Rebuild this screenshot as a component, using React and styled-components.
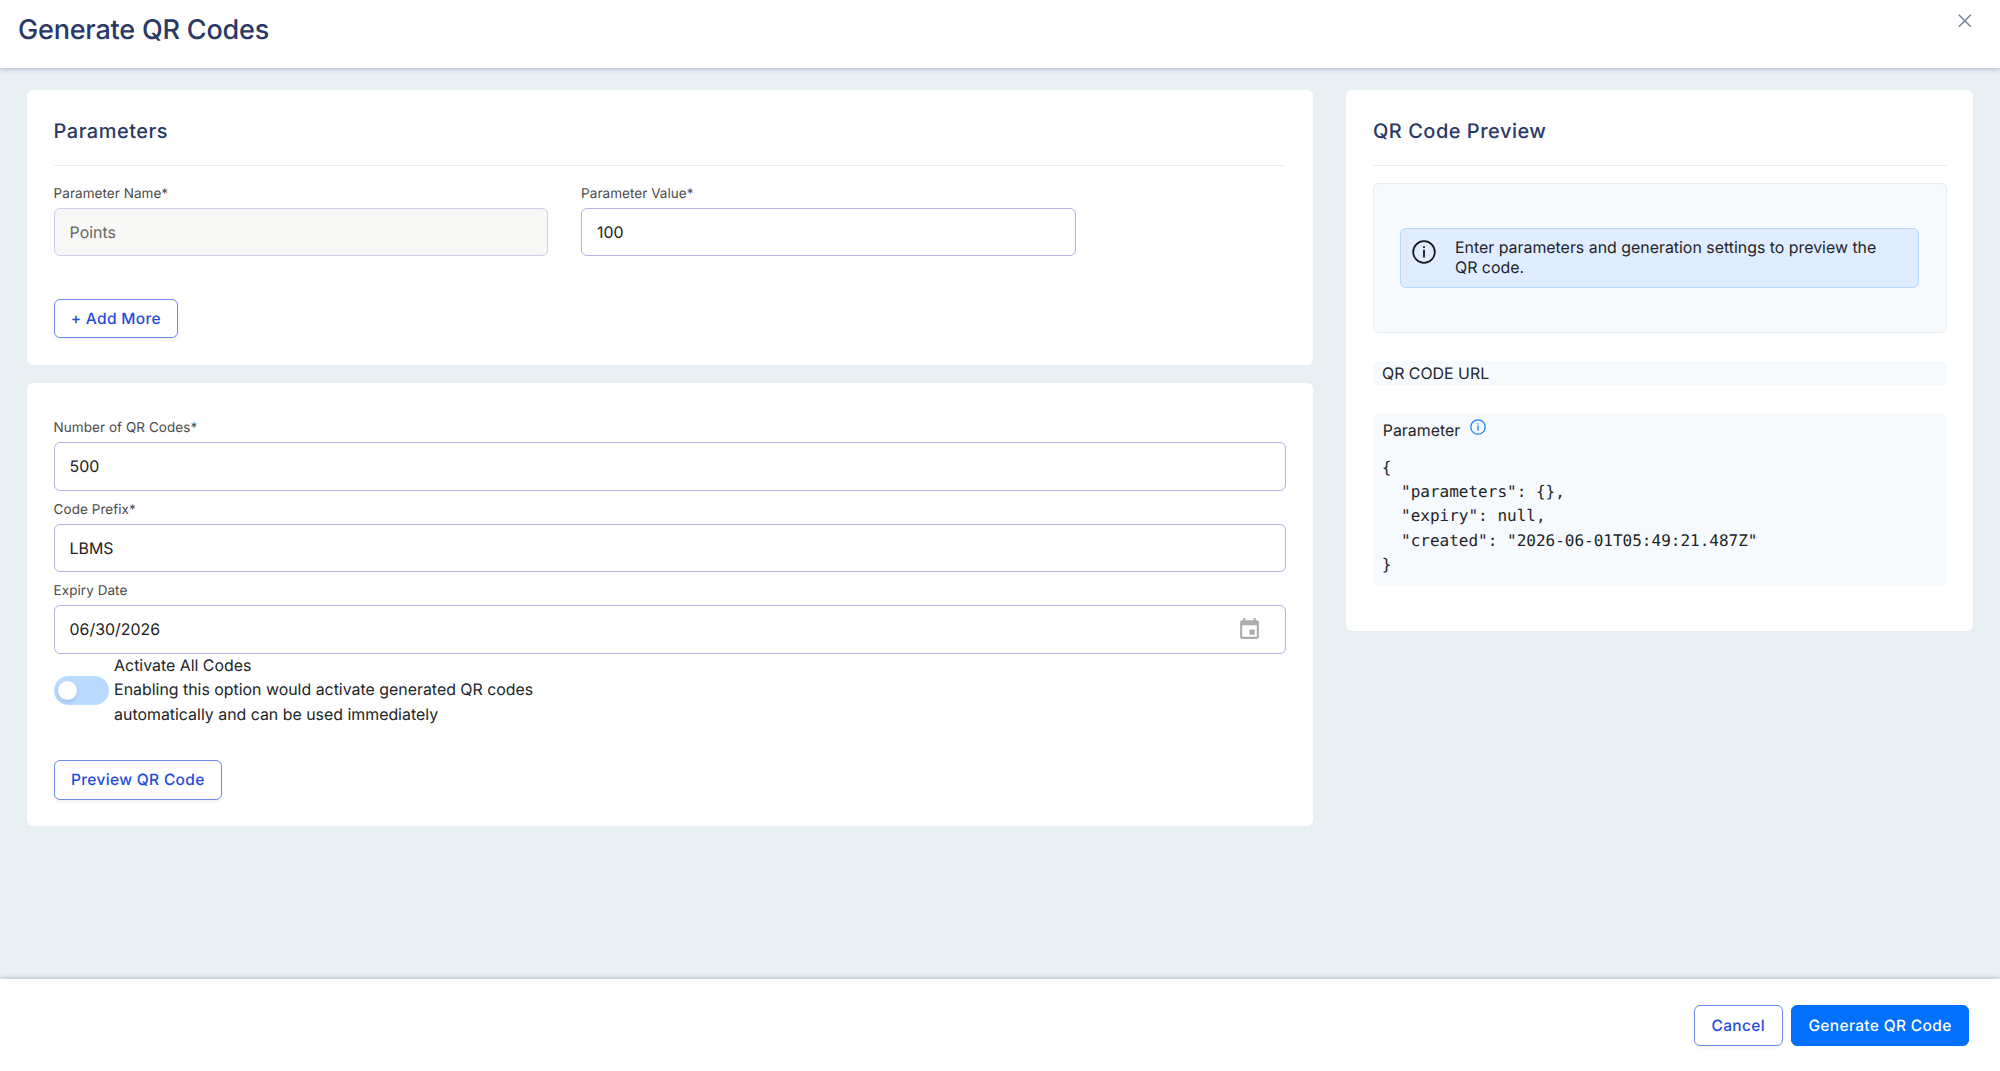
import React from "react";
import styled, { createGlobalStyle } from "styled-components";

const GlobalStyle = createGlobalStyle`
  *, *::before, *::after { box-sizing: border-box; }
  body {
    margin: 0;
    font-family: Inter, "Liberation Sans", sans-serif;
    font-size: 15.9px;
    text-rendering: geometricPrecision;
    color: #212529;
    background: #e8f0f4;
  }
`;

const Screen = styled.div`
  display: flex;
  flex-direction: column;
  height: 1071px;
  overflow: hidden;
`;

const Header = styled.header`
  display: flex;
  justify-content: space-between;
  align-items: flex-start;
  height: 68px;
  flex: none;
  padding: 0 28px 0 18px;
  background: #fff;
  box-shadow: 0 1px 5px rgba(50, 60, 110, 0.32);
`;

const Title = styled.h1`
  margin: 0;
  font-size: 27px;
  line-height: 59px;
  font-weight: 500;
  letter-spacing: -0.2px;
  color: #2a3966;
`;

const CloseButton = styled.button`
  display: flex;
  margin: 14px 0 0;
  padding: 0;
  border: 0;
  background: none;
  color: #727d99;
`;

const Body = styled.main`
  display: flex;
  flex: 1;
  align-items: flex-start;
  gap: 33px;
  padding: 21.7px 26.6px 0 26.8px;
`;

const FormColumn = styled.div`
  display: flex;
  flex-direction: column;
  gap: 18px;
  width: 1286.4px;
`;

const Card = styled.section`
  display: flex;
  flex-direction: column;
  height: ${(p) => p.$height}px;
  flex: ${(p) => (p.$grow ? "1" : "none")};
  padding: ${(p) => p.$top || 27.6}px 26.8px 0 26.8px;
  border-radius: 6px;
  background: #fff;
`;

const CardTitle = styled.h2`
  margin: 0;
  padding-bottom: 18.7px;
  border-bottom: 1px solid #ebeef0;
  font-size: 20px;
  line-height: 29px;
  font-weight: 500;
  letter-spacing: 0.5px;
  color: #2a3966;
`;

const ParameterRow = styled.div`
  display: grid;
  grid-template-columns: 494.5px 494.5px;
  gap: 33px;
  margin-top: 17.6px;
`;

const FieldStack = styled.div`
  display: flex;
  flex-direction: column;
  gap: 8.8px;
`;

const Field = styled.div`
  display: flex;
  flex-direction: column;
  gap: 4.2px;
`;

const Label = styled.label`
  font-size: 13.5px;
  line-height: 20px;
  letter-spacing: 0.05px;
  color: #4a4a4a;
`;

const InputBox = styled.div`
  display: flex;
  align-items: center;
  justify-content: space-between;
  height: 48.6px;
  padding: 0 23.5px 0 15px;
  border: 1px solid ${(p) => (p.$disabled ? "#cbcfec" : "#b1b6e3")};
  border-radius: 6px;
  background: ${(p) => (p.$disabled ? "#f8f8f7" : "#fff")};
  color: ${(p) => (p.$disabled ? "#666" : "#212121")};
`;

const Button = styled.button`
  display: flex;
  align-items: center;
  justify-content: center;
  align-self: flex-start;
  width: ${(p) => p.$width}px;
  height: ${(p) => p.$height || 40}px;
  margin: ${(p) => p.$mt || 0}px 0 0;
  padding: 0;
  border: 1px solid ${(p) => (p.$primary ? "#0070ff" : "#6c8aea")};
  border-radius: 6px;
  background: ${(p) => (p.$primary ? "#0070ff" : "#fff")};
  box-shadow: ${(p) => (p.$primary ? "none" : "0 2px 3px rgba(0, 0, 0, 0.06)")};
  color: ${(p) => (p.$primary ? "#fff" : "#1f4bdc")};
  font: 500 15.5px Inter, "Liberation Sans", sans-serif;
  text-rendering: geometricPrecision;
  letter-spacing: 0.34px;
`;

const ToggleRow = styled.div`
  display: flex;
  align-items: center;
  gap: 5px;
  line-height: 24.3px;
`;

const Switch = styled.span`
  display: flex;
  align-items: center;
  width: 55.5px;
  height: 28.4px;
  padding-left: 4px;
  border-radius: 15px;
  background: #b9dbff;
`;

const Knob = styled.span`
  width: 19px;
  height: 19px;
  border-radius: 50%;
  background: #fff;
  box-shadow: 0 2px 4px rgba(0, 35, 90, 0.15);
`;

const ToggleText = styled.div`
  width: 440px;
`;

const PreviewBox = styled.div`
  display: flex;
  flex-direction: column;
  justify-content: center;
  height: 150px;
  margin-top: 17px;
  padding: 0 26.5px;
  border: 1px solid #e9ecf2;
  border-radius: 6px;
  background: #f7fafd;
`;

const Alert = styled.div`
  display: flex;
  gap: 19px;
  height: 59.6px;
  padding: 9px 30px 0 10.5px;
  border: 1px solid #b8d8fb;
  border-radius: 6px;
  background: #e0ecff;
  line-height: 20.3px;
`;

const AlertIcon = styled.span`
  display: flex;
  flex: none;
  padding-top: 2.3px;
`;

const UrlBar = styled.div`
  height: 24.3px;
  margin-top: 28px;
  padding-left: 9px;
  border-radius: 5px;
  background: #f7fafd;
  line-height: 25px;
`;

const PayloadBox = styled.div`
  height: 173px;
  margin-top: 27.5px;
  padding: 5px 8.8px 0;
  border-radius: 5px;
  background: #f7fafd;
`;

const PayloadTitle = styled.div`
  display: flex;
  gap: 10px;
  height: 24.3px;
  padding-left: 1px;
  line-height: 25px;
`;

const InfoBadge = styled.span`
  display: flex;
  padding-top: 1px;
`;

const Code = styled.pre`
  margin: 13.6px 0 0;
  font-family: "DejaVu Sans Mono", monospace;
  font-size: 16px;
  line-height: 24.3px;
`;

const Footer = styled.footer`
  display: flex;
  justify-content: flex-end;
  gap: 8.3px;
  height: 92px;
  flex: none;
  padding: 26px 31px 0 0;
  background: #fff;
  box-shadow: 0 -1px 5px rgba(50, 60, 110, 0.25);
`;

const CloseIcon = () => (
  <svg width="14" height="14" viewBox="0 0 14 14" fill="none" stroke="currentColor" strokeWidth="1.4">
    <path d="M0.8 0.8L12.8 12.8M12.8 0.8L0.8 12.8" />
  </svg>
);

const InfoIcon = ({ size, color, stroke }) => (
  <svg width={size} height={size} viewBox="0 0 24 24" fill="none" stroke={color} strokeWidth={stroke}>
    <circle cx="12" cy="12" r="10.8" />
    <path d="M12 9.8v7.8M12 6.3v1.8" />
  </svg>
);

const CalendarIcon = () => (
  <svg width="25" height="25" viewBox="0 0 24 24" fill="#acacac">
    <path d="M17 12h-5v5h5v-5zM16 1v2H8V1H6v2H5c-1.11 0-1.99.9-1.99 2L3 19c0 1.1.89 2 2 2h14c1.1 0 2-.9 2-2V5c0-1.1-.9-2-2-2h-1V1h-2zm3 18H5V8h14v11z" />
  </svg>
);

const TextField = ({ label, value, disabled, icon }) => (
  <Field>
    <Label>{label}</Label>
    <InputBox $disabled={disabled}>
      <span>{value}</span>
      {icon}
    </InputBox>
  </Field>
);

const payload = `{
  "parameters": {},
  "expiry": null,
  "created": "2026-06-01T05:49:21.487Z"
}`;

export default function App() {
  return (
    <Screen>
      <GlobalStyle />
      <Header>
        <Title>Generate QR Codes</Title>
        <CloseButton aria-label="Close"><CloseIcon /></CloseButton>
      </Header>
      <Body>
        <FormColumn>
          <Card $height={275}>
            <CardTitle>Parameters</CardTitle>
            <ParameterRow>
              <TextField label="Parameter Name*" value="Points" disabled />
              <TextField label="Parameter Value*" value="100" />
            </ParameterRow>
            <Button $width={124.5} $height={39.5} $mt={42.6}>+ Add More</Button>
          </Card>
          <Card $height={443} $top={35.3}>
            <FieldStack>
              <TextField label="Number of QR Codes*" value="500" />
              <TextField label="Code Prefix*" value="LBMS" />
              <TextField label="Expiry Date" value="06/30/2026" icon={<CalendarIcon />} />
            </FieldStack>
            <ToggleRow>
              <Switch><Knob /></Switch>
              <ToggleText>
                <div>Activate All Codes</div>
                <div>Enabling this option would activate generated QR codes automatically and can be used immediately</div>
              </ToggleText>
            </ToggleRow>
            <Button $width={168.5} $mt={33.1}>Preview QR Code</Button>
          </Card>
        </FormColumn>
        <Card $height={541} $grow>
          <CardTitle>QR Code Preview</CardTitle>
          <PreviewBox>
            <Alert>
              <AlertIcon><InfoIcon size={24} color="#16191d" stroke={1.8} /></AlertIcon>
              <span>Enter parameters and generation settings to preview the QR code.</span>
            </Alert>
          </PreviewBox>
          <UrlBar>QR CODE URL</UrlBar>
          <PayloadBox>
            <PayloadTitle>
              Parameter
              <InfoBadge><InfoIcon size={16} color="#1a7dff" stroke={1.9} /></InfoBadge>
            </PayloadTitle>
            <Code>{payload}</Code>
          </PayloadBox>
        </Card>
      </Body>
      <Footer>
        <Button $width={89} $height={41}>Cancel</Button>
        <Button $width={178} $height={41} $primary>Generate QR Code</Button>
      </Footer>
    </Screen>
  );
}
